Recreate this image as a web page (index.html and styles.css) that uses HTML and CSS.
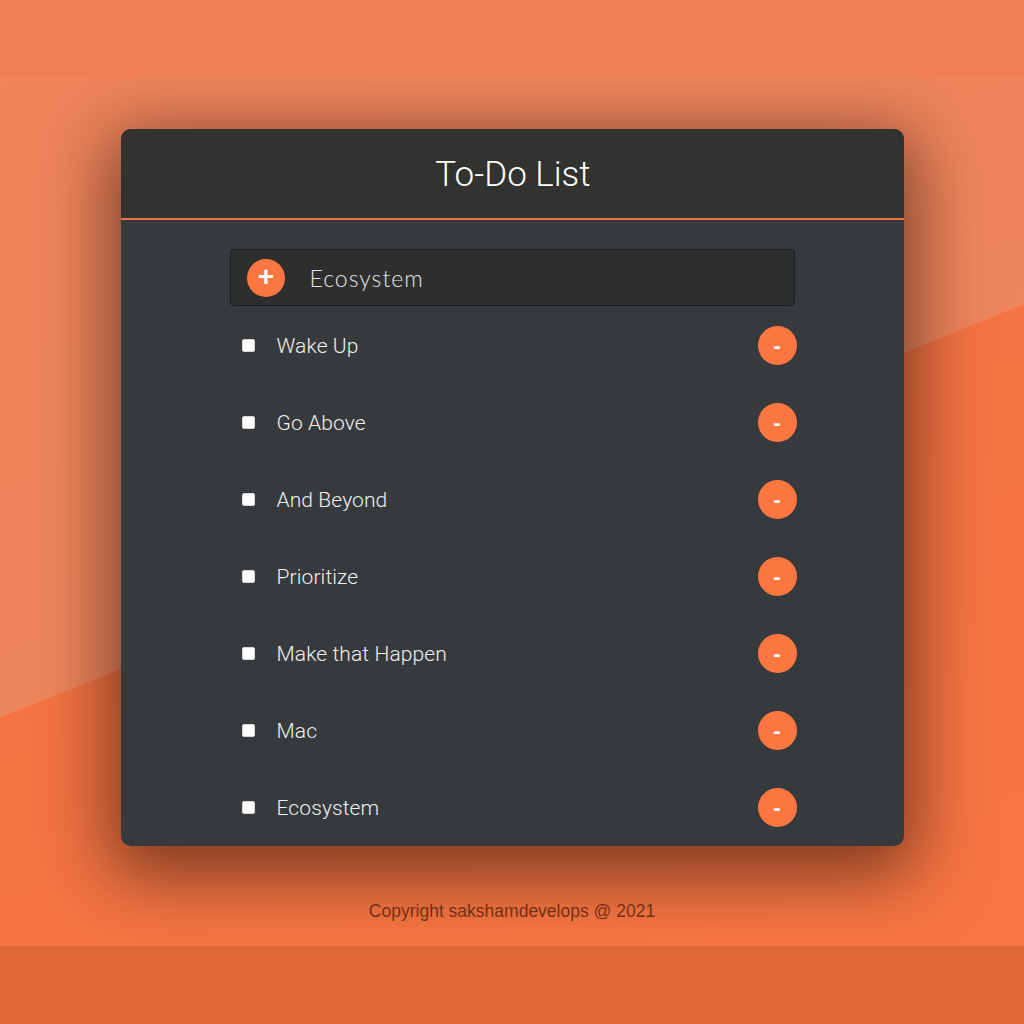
FILE: index.html
```html
<!DOCTYPE html>
<html lang="en">
<head>
<meta charset="utf-8">
<title>To-Do List</title>
<link rel="stylesheet" href="styles.css">
</head>
<body>
<div class="topbar"></div>
<main class="stage">
  <section class="card">
    <header class="card-header">
      <h1 class="title">To-Do List</h1>
    </header>
    <div class="card-body">
      <div class="add-box">
        <button class="add-btn" type="button">+</button>
        <span class="add-text">Ecosystem</span>
      </div>
      <ul class="list">
        <li class="item"><span class="check"></span><span class="label">Wake Up</span><button class="del-btn" type="button">-</button></li>
        <li class="item"><span class="check"></span><span class="label">Go Above</span><button class="del-btn" type="button">-</button></li>
        <li class="item"><span class="check"></span><span class="label">And Beyond</span><button class="del-btn" type="button">-</button></li>
        <li class="item"><span class="check"></span><span class="label">Prioritize</span><button class="del-btn" type="button">-</button></li>
        <li class="item"><span class="check"></span><span class="label">Make that Happen</span><button class="del-btn" type="button">-</button></li>
        <li class="item"><span class="check"></span><span class="label">Mac</span><button class="del-btn" type="button">-</button></li>
        <li class="item"><span class="check"></span><span class="label">Ecosystem</span><button class="del-btn" type="button">-</button></li>
      </ul>
    </div>
  </section>
  <footer class="footer">Copyright sakshamdevelops @ 2021</footer>
</main>
<div class="bottombar"></div>
</body>
</html>
```
FILE: styles.css
```css
* { box-sizing: border-box; }
html, body { margin: 0; padding: 0; }
body {
  background: #e06838;
  font-family: "Liberation Sans", Arial, sans-serif;
}
.topbar {
  height: 77px;
  background: #f07f56;
}
.bottombar {
  height: 78px;
  background: #e06838;
}
.stage {
  height: 869px;
  overflow: hidden;
  display: flex;
  flex-direction: column;
  align-items: center;
  padding-top: 52px;
  background: linear-gradient(158deg, #f0845b 0%, #ef855c 49.9%, #f47443 50%, #f97642 100%);
}
.card {
  width: 783px;
  border-radius: 10px;
  overflow: hidden;
  background: #363a3d;
  box-shadow: 0 18px 70px 12px rgba(0, 0, 0, 0.5);
  flex-shrink: 0;
}
.card-header {
  height: 91px;
  background: #323230;
  border-bottom: 2px solid #e5764a;
  display: flex;
  align-items: center;
  justify-content: center;
}
.title {
  margin: 0;
  padding-top: 2px;
  padding-left: 2px;
  font-family: Roboto, "Liberation Sans", sans-serif;
  font-weight: 300;
  font-size: 35px;
  color: #ffffff;
}
.card-body {
  width: 567px;
  margin-left: 109px;
  padding-top: 29px;
}
.add-box {
  height: 57px;
  width: 565px;
  background: #2e2e2e;
  border: 1px solid #1e1e1e;
  border-radius: 4px;
  display: flex;
  align-items: center;
  padding-left: 16px;
}
.add-btn {
  width: 38px;
  height: 38px;
  border-radius: 50%;
  border: none;
  padding: 0 0 2px 1px;
  background: #fb7640;
  color: #fff;
  font-family: "Liberation Sans", Arial, sans-serif;
  font-weight: 700;
  font-size: 28px;
  line-height: 38px;
  display: flex;
  align-items: center;
  justify-content: center;
}
.add-text {
  margin-left: 25px;
  font-family: Lato, "Open Sans", sans-serif;
  font-weight: 300;
  font-size: 23px;
  color: #e6e6e6;
  letter-spacing: 1px;
}
.list {
  list-style: none;
  margin: 0;
  padding: 1px 0 0;
}
.item {
  height: 77px;
  display: flex;
  align-items: center;
  padding-left: 12px;
}
.check {
  width: 13px;
  height: 13px;
  background: #fff;
  border: 1px solid #d8d8d8;
  border-radius: 2px;
  flex-shrink: 0;
}
.label {
  margin-left: 22px;
  flex: 1;
  font-family: Roboto, "Liberation Sans", sans-serif;
  font-weight: 300;
  font-size: 21px;
  color: #f0f0f0;
  letter-spacing: 0.1px;
}
.del-btn {
  width: 39px;
  height: 39px;
  border-radius: 50%;
  border: none;
  padding: 0;
  background: #fb7640;
  color: #fff;
  font-family: "Liberation Sans", Arial, sans-serif;
  font-weight: 700;
  font-size: 22px;
  line-height: 39px;
  flex-shrink: 0;
}
.footer {
  margin-top: 55px;
  font-size: 17.5px;
  color: rgba(70, 20, 0, 0.72);
  letter-spacing: 0;
}
```
